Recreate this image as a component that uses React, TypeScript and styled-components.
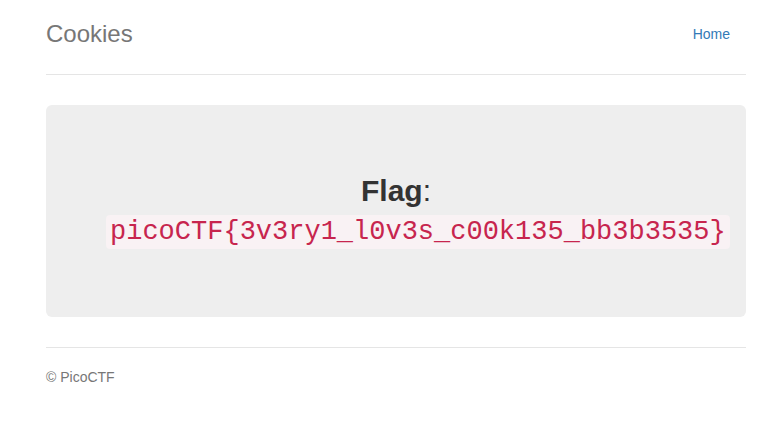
import styled, { createGlobalStyle } from "styled-components";

const GlobalStyle = createGlobalStyle`
    html, body {
        margin: 0;
        padding: 0;
        background: #fff;
    }
    body {
        font-family: "Liberation Sans", Arial, sans-serif;
        font-size: 14px;
        line-height: 1.42857143;
        color: #333;
    }
`;

const Container = styled.div`
    width: 700px;
    margin-left: 46px;
`;

const Header = styled.div`
    display: flex;
    justify-content: space-between;
    align-items: center;
    padding: 14px 0 20px;
    border-bottom: 1px solid #e5e5e5;
    margin-bottom: 30px;
`;

const Brand = styled.h3`
    margin: 0;
    font-size: 24px;
    font-weight: 500;
    line-height: 40px;
    color: #777;
`;

const NavLink = styled.a`
    display: block;
    padding: 10px 16px 10px 15px;
    line-height: 20px;
    font-size: 14px;
    color: #337ab7;
    text-decoration: none;
`;

const Jumbotron = styled.div`
    background: #eee;
    border-radius: 6px;
    padding: 48px 60px;
    text-align: center;
    height: 212px;
    box-sizing: border-box;
`;

const FlagLine = styled.h2`
    margin: 19px 0 11px;
    font-size: 30px;
    font-weight: 500;
    line-height: 38px;
    color: #333;
    b {
        font-weight: 700;
    }
`;

const Code = styled.code`
    font-family: "Liberation Mono", "Courier New", monospace;
    font-size: 27px;
    padding: 2px 4px;
    color: #c7254e;
    background: #f9f2f4;
    border-radius: 4px;
    white-space: nowrap;
`;

const Footer = styled.footer`
    margin-top: 30px;
    padding-top: 19px;
    border-top: 1px solid #e5e5e5;
    color: #777;
    p {
        margin: 0 0 10px;
        line-height: 20px;
    }
`;

const App = () => {
    return (
        <>
            <GlobalStyle />
            <Container>
                <Header>
                    <Brand>Cookies</Brand>
                    <NavLink href="#">Home</NavLink>
                </Header>
                <Jumbotron>
                    <FlagLine>
                        <b>Flag</b>: <Code>picoCTF{"{"}3v3ry1_l0v3s_c00k135_bb3b3535{"}"}</Code>
                    </FlagLine>
                </Jumbotron>
                <Footer>
                    <p>© PicoCTF</p>
                </Footer>
            </Container>
        </>
    );
};

export default App;
